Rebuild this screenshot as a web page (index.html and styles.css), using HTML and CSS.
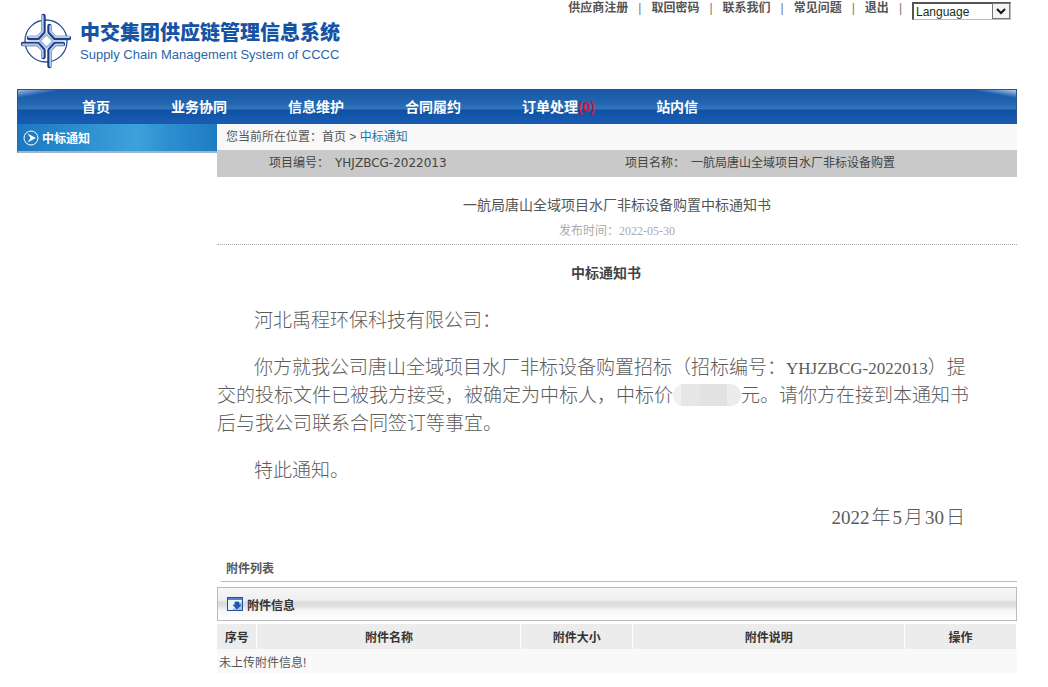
FILE: index.html
```html
<!DOCTYPE html>
<html lang="zh-CN">
<head>
  <meta charset="utf-8">
  <title>中交集团供应链管理信息系统</title>
  <link rel="stylesheet" href="styles.css">
</head>
<body>
<div class="page">

  <!-- header -->
  <header class="header">
    <a class="logo" href="#">
      <svg class="logo-mark" viewBox="0 0 54 58" aria-hidden="true">
        <circle cx="26" cy="29" r="21" fill="none" stroke="#2c4f92" stroke-width="1.3"/>
        <g fill="none" stroke-linecap="round" stroke-linejoin="round">
          <g stroke="#1d3c82" stroke-width="4.4">
            <path d="M23.5 4V20L18 26H9"/>
            <path d="M29.5 14V20L35 26H49"/>
            <path d="M3 32H18L23.5 38V45"/>
            <path d="M43 32H35L29.5 38V54"/>
          </g>
          <g stroke="#b3caeb" stroke-width="2.2">
            <path d="M22.6 4V19.5L17.5 25H9"/>
            <path d="M30.4 14V19.5L35.5 25H49"/>
            <path d="M3 32.6H17.5L22.6 38.5V45"/>
            <path d="M43 32.6H35.5L30.4 38.5V54"/>
          </g>
        </g>
        <path d="M26.500 22.500L33 29L26.500 35.500L20 29Z" fill="#fff" stroke="#9db9e4" stroke-width="2"/>
      </svg>
      <span class="logo-text">
        <strong class="logo-cn">中交集团供应链管理信息系统</strong>
        <span class="logo-en">Supply Chain Management System of CCCC</span>
      </span>
    </a>
    <div class="top-links">
      <a href="#">供应商注册</a><i>|</i>
      <a href="#">取回密码</a><i>|</i>
      <a href="#">联系我们</a><i>|</i>
      <a href="#">常见问题</a><i>|</i>
      <a href="#">退出</a><i>|</i>
      <div class="language">
        <select aria-label="Language">
          <option>Language</option>
        </select>
        <svg class="language-arrow" viewBox="0 0 18 16" aria-hidden="true">
          <rect x=".5" y=".5" width="17" height="15" fill="#f4f4f4" stroke="#777"/>
          <path d="M5 6L9 10L13 6" fill="none" stroke="#111" stroke-width="2"/>
        </svg>
      </div>
    </div>
  </header>

  <!-- main menu -->
  <nav class="nav">
    <a href="#">首页</a>
    <a href="#">业务协同</a>
    <a href="#">信息维护</a>
    <a href="#">合同履约</a>
    <a href="#">订单处理<span class="count">(0)</span></a>
    <a href="#">站内信</a>
  </nav>

  <div class="columns">
    <aside class="sidebar">
      <a class="side-item" href="#">
        <svg class="side-icon" viewBox="0 0 16 16" aria-hidden="true">
          <circle cx="8" cy="8" r="7" fill="none" stroke="#fff"/>
          <path d="M4.500 3.500L13 8L4.500 12.500L7.500 8Z" fill="#fff"/>
        </svg>
        中标通知
      </a>
    </aside>

    <main class="main">
      <div class="breadcrumb">您当前所在位置：<a href="#">首页</a> &gt; <a class="current" href="#">中标通知</a></div>
      <div class="project">
        <div class="project-no">项目编号：<span>YHJZBCG-2022013</span></div>
        <div class="project-name">项目名称：<span>一航局唐山全域项目水厂非标设备购置</span></div>
      </div>

      <div class="notice-head">
        <h1>一航局唐山全域项目水厂非标设备购置中标通知书</h1>
        <p>发布时间：2022-05-30</p>
      </div>

      <article class="letter">
        <h2>中标通知书</h2>
        <p>河北禹程环保科技有限公司：</p>
        <p>你方就我公司唐山全域项目水厂非标设备购置招标（招标编号：<span class="latin">YHJZBCG-2022013</span>）提交的投标文件已被我方接受，被确定为中标人，中标价<span class="masked"></span>元。请你方在接到本通知书后与我公司联系合同签订等事宜。</p>
        <p>特此通知。</p>
        <p class="sign-date"><span>2022</span><span>年</span><span>5</span><span>月</span><span>30</span><span>日</span></p>
      </article>

      <section class="files">
        <h3 class="files-title">附件列表</h3>
        <div class="files-bar">
          <svg class="files-icon" viewBox="0 0 16 14" aria-hidden="true">
            <rect x=".5" y=".5" width="15" height="13" fill="#e9f3fd" stroke="#22509c"/>
            <path d="M1 1H15V3H1Z" fill="#4d86d0"/>
            <path d="M15 4V13H5Z" fill="#9dbfea"/>
            <path d="M8 5H12V8H14L10 12L6 8H8Z" fill="#2358b5" stroke="#163c80" stroke-width=".6"/>
          </svg>
          附件信息
        </div>
        <table class="files-table">
          <thead>
            <tr>
              <th class="col-no">序号</th>
              <th class="col-name">附件名称</th>
              <th class="col-size">附件大小</th>
              <th class="col-desc">附件说明</th>
              <th class="col-action">操作</th>
            </tr>
          </thead>
          <tbody>
            <tr>
              <td colspan="5">未上传附件信息!</td>
            </tr>
          </tbody>
        </table>
      </section>
    </main>
  </div>

</div>
</body>
</html>
```
FILE: styles.css
```css
* {
  box-sizing: border-box;
}

body {
  margin: 0;
  background: #fff;
  color: #555;
  font-family: "Liberation Sans", "Noto Sans CJK SC", sans-serif;
  font-size: 12px;
}

a {
  color: inherit;
  text-decoration: none;
}

h1, h2, h3, p {
  margin: 0;
}

.page {
  padding: 0 31px 0 17px;
}

/* header */
.header {
  display: flex;
  justify-content: space-between;
  align-items: flex-start;
  height: 89px;
}

.logo {
  display: flex;
  gap: 6px;
  padding: 12px 0 0 3px;
}

.logo-mark {
  width: 54px;
  height: 58px;
}

.logo-text {
  display: flex;
  flex-direction: column;
  padding-top: 8px;
}

.logo-cn {
  color: #1653a4;
  font-size: 20px;
  font-weight: 900;
  line-height: 26px;
}

.logo-en {
  color: #2c66a8;
  font-size: 13px;
  line-height: 18px;
}

.top-links {
  display: flex;
  gap: 10px;
  padding-right: 6px;
  font-weight: bold;
  line-height: 16px;
}

.top-links i {
  color: #777;
  font-style: normal;
  font-weight: normal;
}

.language {
  position: relative;
  margin-top: 2px;
  width: 99px;
  height: 18px;
}

.language select {
  width: 100%;
  height: 100%;
  padding: 0 2px;
  border: 1px solid #bbb;
  border-top: 2px solid #555;
  border-left: 2px solid #555;
  background: #fff;
  color: #143014;
  font: 12px "Liberation Sans", sans-serif;
  appearance: none;
}

.language-arrow {
  position: absolute;
  top: 1px;
  right: 1px;
  width: 18px;
  height: 16px;
  pointer-events: none;
}

/* main menu */
.nav {
  display: flex;
  gap: 61px;
  height: 35px;
  padding-left: 64px;
  border: 1px solid #2b5580;
  background:
    linear-gradient(170deg, #9dbce0 0, transparent 8px) left top / 40px 12px no-repeat,
    linear-gradient(190deg, #b4cdeb 0, transparent 8px) right top / 40px 12px no-repeat,
    linear-gradient(#1758a8 0, #2265b0 40%, #3676bb 58%, #0d51a4 60%, #1a5cb2 100%);
  color: #fff;
  font-size: 14px;
  font-weight: bold;
  line-height: 34px;
}

.nav .count {
  color: #d3153c;
}

.columns {
  display: flex;
}

.sidebar {
  flex: none;
  width: 200px;
}

.side-item {
  display: flex;
  align-items: center;
  gap: 3px;
  height: 29px;
  padding-left: 5px;
  border-left: 1px solid #2b6ca8;
  border-bottom: 2px solid #9fb4c4;
  background: linear-gradient(90deg, #1c78c0 0, #3da2dc 60%, #2d8fd0 75%, #1f7cc4 100%);
  color: #fff;
  font-weight: bold;
}

.side-icon {
  width: 16px;
  height: 16px;
}

.main {
  flex: 1;
  min-width: 0;
}

.breadcrumb {
  height: 26px;
  padding-left: 9px;
  background: #f8f8f9;
  line-height: 26px;
}

.breadcrumb .current {
  color: #1b76a6;
}

.project {
  display: flex;
  height: 27px;
  background: #c9c9c9;
  color: #444;
  line-height: 27px;
}

.project-no {
  width: 51%;
  padding-left: 52px;
}

.project-no span {
  margin-left: 6px;
  font-family: "DejaVu Sans", sans-serif;
}

.project-name span {
  margin-left: 6px;
}

/* notice */
.notice-head {
  padding-top: 16px;
  border-bottom: 1px dotted #aaa;
  text-align: center;
}

.notice-head h1 {
  font-size: 14px;
  font-weight: normal;
  line-height: 24px;
}

.notice-head p {
  padding: 4px 0 3px;
  color: #aaa;
  font-family: "Liberation Serif", "Noto Sans CJK SC", serif;
  line-height: 20px;
}

.letter {
  padding: 19px 40px 0 0;
  color: #5c5c5c;
  font-family: "Liberation Serif", "Noto Sans CJK SC", serif;
  font-size: 19px;
  font-weight: 300;
  line-height: 28px;
}

.letter h2 {
  margin-bottom: 23px;
  padding-left: 18px;
  color: #444;
  font-size: 14px;
  line-height: 20px;
  text-align: center;
}

.letter p {
  margin-bottom: 19px;
  text-indent: 37px;
}

.latin {
  font-size: 17px;
  line-height: 20px;
}

.masked {
  display: inline-block;
  width: 68px;
  height: 22px;
  border-radius: 11px;
  background: linear-gradient(90deg, #f0f0f0 12%, #e6e6e6 12%, #e6e6e6 40%, #e2e2e2 40%, #e2e2e2 80%, #ececec 80%);
  vertical-align: -4px;
}

.letter .sign-date {
  display: flex;
  justify-content: flex-end;
  gap: 2px;
  padding-right: 12px;
  text-indent: 0;
}

/* attachments */
.files {
  padding-top: 6px;
}

.files-title {
  margin-left: 4px;
  padding-left: 5px;
  border-bottom: 1px solid #bbb;
  font-size: 12px;
  line-height: 24px;
}

.files-bar {
  display: flex;
  align-items: center;
  gap: 4px;
  height: 34px;
  margin-top: 5px;
  padding-left: 9px;
  border: 1px solid #bbb;
  background: linear-gradient(#f6f6f6 0, #efefef 38%, #dcdcdc 44%, #dedede 55%, #f6f6f6 70%, #fff 100%);
  color: #333;
  font-weight: bold;
}

.files-icon {
  width: 16px;
  height: 14px;
}

.files-table {
  width: 100%;
  margin-top: 3px;
  border-collapse: collapse;
  table-layout: fixed;
}

.files-table th {
  height: 25px;
  padding: 0;
  border-right: 1px solid #fff;
  background: #ececec;
  color: #333;
}

.files-table td {
  height: 24px;
  padding: 0 2px;
  background: #f9f9f9;
}

.col-no {
  width: 5%;
}

.col-name {
  width: 33%;
}

.col-size {
  width: 14%;
}

.col-desc {
  width: 34%;
}

.col-action {
  width: 14%;
}
```
